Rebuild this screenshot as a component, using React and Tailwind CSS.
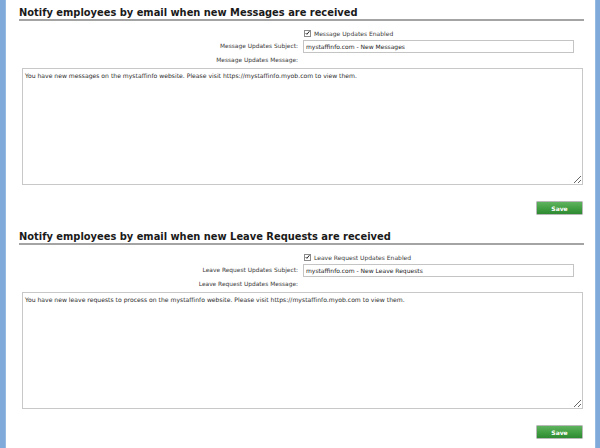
import React from "react";

const small = { fontFamily: '"DejaVu Sans", Verdana, sans-serif' };

function Check() {
  return (
    <span className="inline-flex w-[7px] h-[7px] border border-[#8a8a8a] bg-white items-center justify-center shrink-0">
      <svg width="6" height="6" viewBox="0 0 6 6">
        <path d="M0.8 3.1 L2.3 4.6 L5.3 0.9" fill="none" stroke="#222" strokeWidth="1.2" />
      </svg>
    </span>
  );
}

function Section({ title, enabled, subjectLabel, subject, messageLabel, message }) {
  return (
    <div className="flex flex-col pb-[9px]">
      <h2
        className="pt-[7px] leading-[12px] text-[9.9px] font-bold text-[#1a1a1a] border-b-2 border-[#a4a4a4] mr-[11px]"
        style={{ fontFamily: '"DejaVu Sans", Verdana, sans-serif' }}
      >
        {title}
      </h2>
      <div className="flex items-center h-[12px] mt-[6px] pl-[285px] gap-[3px] text-[6px] text-[#3a3a3a]" style={small}>
        <Check />
        <span>{enabled}</span>
      </div>
      <div className="flex items-center h-[13px] mt-[1px] text-[5.9px] text-[#3a3a3a]" style={small}>
        <div className="w-[279px] text-right">{subjectLabel}</div>
        <div className="ml-[5px] w-[271px] h-[13px] border border-[#c4c4c4] bg-white flex items-center pl-[2px] text-[6px] text-[#222]">
          {subject}
        </div>
      </div>
      <div className="flex items-center h-[13px] mt-[1px] text-[5.9px] text-[#3a3a3a]" style={small}>
        <div className="w-[279px] text-right">{messageLabel}</div>
      </div>
      <textarea
        readOnly
        defaultValue={message}
        className="mt-[1px] ml-[3px] w-[561px] h-[117px] border border-[#c8c8c8] bg-white px-[2px] pt-[2px] text-[6.1px] leading-[9px] text-[#2a2a2a] outline-none"
        style={small}
      />
      <div className="flex justify-end mt-[16px] mr-[12px]">
        <div className="w-[47px] h-[14px] border border-[#b8b8b8] rounded-[1px] bg-linear-to-b from-[#5fb35f] via-[#44a044] to-[#2e8a32] flex items-center justify-center text-white font-bold text-[6px]" style={small}>
          Save
        </div>
      </div>
    </div>
  );
}

export default function App() {
  return (
    <div className="flex w-[600px] h-[448px] overflow-hidden bg-white">
      <div className="w-[6px] bg-[#80aad9] border-r border-[#96bbe3]" />
      <div className="flex-1 flex flex-col pl-[13px]">
        <Section
          title="Notify employees by email when new Messages are received"
          enabled="Message Updates Enabled"
          subjectLabel="Message Updates Subject:"
          subject="mystaffinfo.com - New Messages"
          messageLabel="Message Updates Message:"
          message="You have new messages on the mystaffinfo website. Please visit https://mystaffinfo.myob.com to view them."
        />
        <Section
          title="Notify employees by email when new Leave Requests are received"
          enabled="Leave Request Updates Enabled"
          subjectLabel="Leave Request Updates Subject:"
          subject="mystaffinfo.com - New Leave Requests"
          messageLabel="Leave Request Updates Message:"
          message="You have new leave requests to process on the mystaffinfo website. Please visit https://mystaffinfo.myob.com to view them."
        />
      </div>
      <div className="w-[5px] bg-[#80aad9] border-l border-[#96bbe3]" />
    </div>
  );
}
